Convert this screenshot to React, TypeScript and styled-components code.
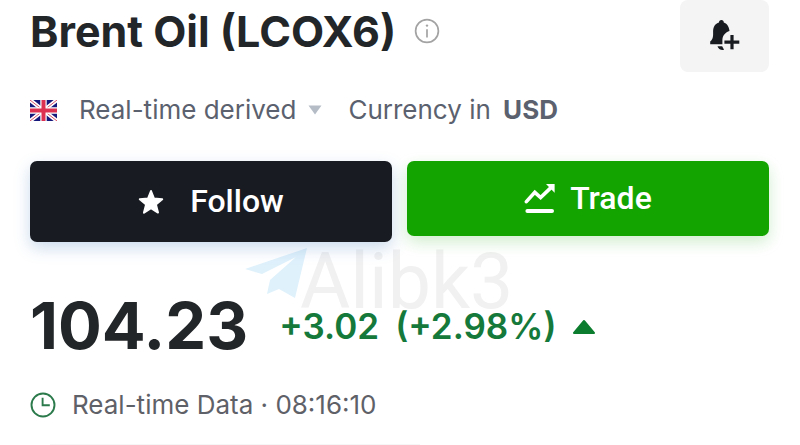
import styled, { createGlobalStyle } from 'styled-components';

const GlobalStyle = createGlobalStyle`
  * { box-sizing: border-box; }
  body {
    margin: 0;
    background: #fff;
    color: #232629;
    font-family: Inter, "Liberation Sans", sans-serif;
  }
  button { font-family: inherit; cursor: pointer; border: none; }
`;

const Page = styled.main`
  padding: 0 31px 0 30px;
  overflow: hidden;
`;

const Header = styled.header`
  display: flex;
  justify-content: space-between;
  align-items: flex-start;
`;

const TitleGroup = styled.div`
  display: flex;
  align-items: center;
  gap: 18px;
  height: 61px;
`;

const Title = styled.h1`
  margin: 0;
  font-size: 43px;
  line-height: 60px;
  font-weight: 700;
  white-space: nowrap;
`;

const IconButton = styled.button`
  display: flex;
  padding: 0;
  background: none;
  color: #a3a3a3;
`;

const AlertButton = styled.button`
  display: flex;
  align-items: center;
  justify-content: center;
  width: 89px;
  height: 72px;
  padding: 0;
  border-radius: 8px;
  background: #f4f4f4;
  color: #181c21;
`;

const MetaRow = styled.div`
  display: flex;
  align-items: center;
  margin-top: 20px;
  font-size: 26px;
  line-height: 36px;
  color: #5b616e;
  white-space: nowrap;
`;

const SourceButton = styled.button`
  display: flex;
  align-items: center;
  gap: 12px;
  margin: 0 26px 0 22px;
  padding: 0;
  background: none;
  color: inherit;
  font-size: inherit;
  line-height: inherit;
`;

const Currency = styled.span`
  strong {
    margin-left: 5px;
    font-weight: 700;
  }
`;

const Actions = styled.div`
  display: grid;
  grid-template-columns: 1fr 1fr;
  align-items: start;
  gap: 15px;
  margin-top: 33px;
`;

const ActionButton = styled.button<{ $bg: string; $shadow: string; $height: number; $gap: number }>`
  display: flex;
  align-items: center;
  justify-content: center;
  gap: ${props => props.$gap}px;
  height: ${props => props.$height}px;
  padding: 0 0 2px;
  border-radius: 7px;
  background: ${props => props.$bg};
  box-shadow: 0 6px 16px ${props => props.$shadow};
  color: #fff;
  font-family: Roboto, sans-serif;
  font-size: 32px;
  font-weight: 500;
`;

const Quote = styled.section`
  position: relative;
  margin-top: 44px;
`;

const Watermark = styled.div`
  position: absolute;
  z-index: -1;
  left: 214px;
  top: -44px;
  display: flex;
  color: #f1f1f1;
  font-family: Roboto, sans-serif;
  font-size: 77px;
  font-weight: 400;
  line-height: 80px;

  svg { margin-right: -8px; }
`;

const PriceRow = styled.div`
  display: flex;
  align-items: center;
  height: 80px;
  white-space: nowrap;
`;

const Price = styled.span`
  font-size: 65px;
  line-height: 80px;
  font-weight: 700;
`;

const Change = styled.div`
  display: flex;
  align-items: center;
  gap: 16px;
  margin-left: 31px;
  color: #14793a;
  font-size: 35px;
  font-weight: 600;
`;

const StatusRow = styled.div`
  display: flex;
  align-items: center;
  gap: 16px;
  margin-top: 21px;
  font-size: 26px;
  line-height: 36px;
  color: #5f6168;
`;

const Divider = styled.hr`
  width: 50%;
  margin: 21px 0 0 20px;
  border: none;
  border-top: 1px solid #f6f6f6;
`;

const InfoIcon = () => (
  <svg width="26" height="26" viewBox="0 0 26 26" fill="none" stroke="currentColor" strokeWidth="1.7">
    <circle cx="13" cy="13" r="11.4" />
    <path d="M13 11.2V19.5" />
    <circle cx="13" cy="7.6" r="1.2" fill="currentColor" stroke="none" />
  </svg>
);

const BellPlusIcon = () => (
  <svg width="32" height="32" viewBox="0 0 32 32" fill="currentColor">
    <path d="M12.4 0C13.9 0 14.9 1.1 14.8 2.5C17.7 3.5 20 6 20.5 11C16.4 12.2 13.8 15.4 13.4 19.4V24.3H1.2V21.6C3.2 19.8 4 18 4.1 15V11C4.2 6.6 6.2 3.5 10 2.5C9.9 1.1 10.9 0 12.4 0Z" />
    <path d="M8.5 26.3H13.2L15 29.8C12 30.5 9.2 29 8.5 26.3Z" />
    <path d="M21.4 15H24.6V20.5H30.3V23.7H24.6V29.2H21.4V23.7H15.4V20.5H21.4Z" />
  </svg>
);

const FlagUK = () => (
  <svg width="27" height="21" viewBox="0 0 27 21">
    <rect width="27" height="21" fill="#17187c" />
    <path d="M0 0L27 21M27 0L0 21" stroke="#fff" strokeWidth="4" />
    <path d="M0 0L27 21M27 0L0 21" stroke="#d8536b" strokeWidth="1" />
    <path d="M13.5 0V21M0 10.5H27" stroke="#fff" strokeWidth="6.4" />
    <path d="M13.5 0V21M0 10.5H27" stroke="#dc3150" strokeWidth="4" />
  </svg>
);

const CaretDown = () => (
  <svg width="14" height="10" viewBox="0 0 14 10">
    <path d="M0.5 0.5H13.5L7 9.5Z" fill="#b5bcc6" />
  </svg>
);

const StarIcon = () => (
  <svg width="26" height="26" viewBox="0 0 26 26">
    <path
      d="M13 3L16 10.6L24.2 11.2L17.9 16.4L20 24.6L13 20.2L6 24.6L8.1 16.4L1.8 11.2L10 10.6Z"
      fill="#fff"
      stroke="#fff"
      strokeWidth="2"
      strokeLinejoin="round"
    />
  </svg>
);

const TradeIcon = () => (
  <svg width="32" height="30" viewBox="0 0 32 30" fill="none" stroke="#fff">
    <path d="M2.4 18.6L10.8 9.4L16.6 14.6L27.5 4.1" strokeWidth="3.6" strokeLinecap="round" />
    <path d="M22 1H30.6V9.8Z" fill="#fff" stroke="none" />
    <path d="M3.4 27.9H28" strokeWidth="4" strokeLinecap="round" />
  </svg>
);

const PlaneIcon = () => (
  <svg width="64" height="64" viewBox="0 0 64 64" fill="#dff1fb">
    <path d="M1 27L63 6L51 56L35 47L23 52L26 38L52 15L18 32Z" />
  </svg>
);

const ArrowUp = () => (
  <svg width="24" height="16" viewBox="0 0 24 16">
    <path d="M12 3L22 15H2Z" fill="#0c7d2e" stroke="#0c7d2e" strokeWidth="2" strokeLinejoin="round" />
  </svg>
);

const ClockIcon = () => (
  <svg width="26" height="26" viewBox="0 0 26 26" fill="none" stroke="#2b7a4b" strokeWidth="1.9">
    <circle cx="13" cy="13" r="11.5" />
    <path d="M12.6 5.8V13.3H19.8" />
  </svg>
);

export default function App() {
  return (
    <>
      <GlobalStyle />
      <Page>
        <Header>
          <TitleGroup>
            <Title>Brent Oil (LCOX6)</Title>
            <IconButton aria-label="Info"><InfoIcon /></IconButton>
          </TitleGroup>
          <AlertButton aria-label="Create alert"><BellPlusIcon /></AlertButton>
        </Header>

        <MetaRow>
          <FlagUK />
          <SourceButton>
            Real-time derived
            <CaretDown />
          </SourceButton>
          <Currency>Currency in <strong>USD</strong></Currency>
        </MetaRow>

        <Actions>
          <ActionButton $bg="#181b22" $shadow="rgba(70, 125, 190, 0.28)" $height={81} $gap={26}>
            <StarIcon />
            Follow
          </ActionButton>
          <ActionButton $bg="#14a400" $shadow="rgba(20, 164, 0, 0.2)" $height={75} $gap={14}>
            <TradeIcon />
            Trade
          </ActionButton>
        </Actions>

        <Quote>
          <Watermark>
            <PlaneIcon />
            Alibk3
          </Watermark>
          <PriceRow>
            <Price>104.23</Price>
            <Change>
              <span>+3.02</span>
              <span>(+2.98%)</span>
              <ArrowUp />
            </Change>
          </PriceRow>
          <StatusRow>
            <ClockIcon />
            <span>Real-time Data · 08:16:10</span>
          </StatusRow>
        </Quote>
        <Divider />
      </Page>
    </>
  );
}
